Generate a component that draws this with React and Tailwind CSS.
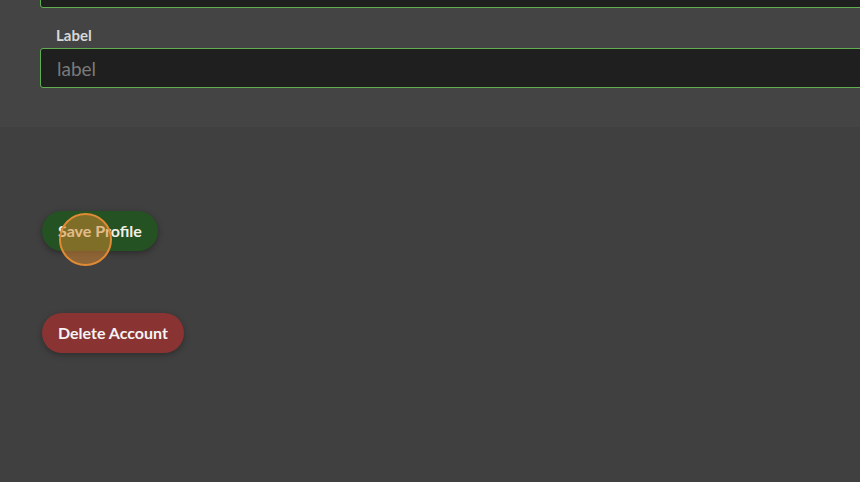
import React from 'react';

function TextField({ placeholder, className = '' }) {
  return (
    <input
      placeholder={placeholder}
      className={`block h-10 w-[900px] rounded-[3px] border border-[#5fae4f] bg-[#1f1f1f] px-4 font-['Lato',sans-serif] text-[19px] text-[#ddd] placeholder:text-[#7a7a7a] outline-none ${className}`}
    />
  );
}

export default function App() {
  return (
    <div className="min-h-[482px] w-full overflow-hidden bg-[#404040] font-['Lato',sans-serif]">
      <section className="bg-[#444444] pb-[39px] pl-10">
        <TextField placeholder="" className="-mt-8" />
        <label className="mt-[17px] mb-[3px] block h-5 pl-4 text-[15px] font-bold leading-5 text-[#d8d8d8]">
          Label
        </label>
        <TextField placeholder="label" />
      </section>

      <div className="flex flex-col items-start gap-[62px] pl-[42px] pt-[84px]">
        <div className="relative">
          <button className="h-10 rounded-full bg-[#245222] px-4 text-[16px] font-bold text-[#f1efe6] shadow-[0_2px_6px_rgba(0,0,0,0.35)]">
            Save Profile
          </button>
          <span className="pointer-events-none absolute left-[17px] top-[2px] h-[53px] w-[53px] rounded-full border-2 border-[#e08a35] bg-[#d98a2c]/50" />
        </div>
        <button className="h-10 rounded-full bg-[#8a3333] px-4 text-[16px] font-bold text-[#f4f4f4] shadow-[0_2px_6px_rgba(0,0,0,0.3)]">
          Delete Account
        </button>
      </div>
    </div>
  );
}
